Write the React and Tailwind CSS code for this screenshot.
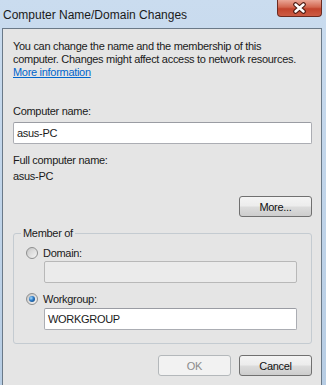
import React from 'react';

const font = { fontFamily: '"Liberation Sans", Arial, sans-serif' };

const Radio = ({ checked }) => (
  <span className="w-[12px] h-[12px] rounded-full border border-[#8e8f8f] bg-[linear-gradient(135deg,#c4c4c4,#f6f6f6)] flex items-center justify-center shrink-0">
    {checked ? (
      <span className="w-[6px] h-[6px] rounded-full bg-[radial-gradient(circle_at_35%_35%,#a6dcff_0%,#2a78c4_45%,#0d3a6e_100%)]" />
    ) : (
      <span className="w-[6px] h-[6px] rounded-full bg-[linear-gradient(135deg,#d2d2d2,#ececec)]" />
    )}
  </span>
);

const Button = ({ children, disabled, className = '' }) => (
  <button
    className={`w-[73px] h-[21px] rounded-[3px] border text-[11px] tracking-[-0.3px] flex items-center justify-center ${
      disabled
        ? 'border-[#b4b8bb] bg-[#f2f2f2] text-[#8b8b8b]'
        : 'border-[#707070] bg-[linear-gradient(to_bottom,#f4f4f4_0%,#ececec_48%,#dcdcdc_52%,#cdcdcd_100%)] text-[#111]'
    } ${className}`}
  >
    {children}
  </button>
);

const CloseIcon = () => (
  <svg width="15" height="12" viewBox="0 0 15 12">
    <path d="M3.5 2.5 L11.5 9.5 M11.5 2.5 L3.5 9.5" stroke="#4a1810" strokeWidth="4.6" strokeLinecap="round" />
    <path d="M3.5 2.5 L11.5 9.5 M11.5 2.5 L3.5 9.5" stroke="#ffffff" strokeWidth="2.5" strokeLinecap="round" />
  </svg>
);

export default function App() {
  return (
    <div
      className="w-[326px] h-[385px] flex flex-col overflow-hidden bg-[linear-gradient(to_bottom,#cadcef,#b7cde4)]"
      style={font}
    >
      {/* Title bar */}
      <div className="h-[28px] flex items-start justify-between shrink-0">
        <span className="mt-[8px] ml-[3px] text-[12px] leading-[14px] text-[#1a1a1a]">
          Computer Name/Domain Changes
        </span>
        <div className="mr-[4px] w-[45px] h-[17px] rounded-b-[4px] border border-t-0 border-[#6b2a20] bg-[linear-gradient(to_bottom,#eaa696_0%,#d2664f_45%,#c2442d_55%,#cc5c45_100%)] flex items-center justify-center">
          <CloseIcon />
        </div>
      </div>

      {/* Dialog body */}
      <div className="flex-1 ml-[2px] mr-[4px] border-l border-t border-r border-[#6a7988] bg-[#e5e5e5] pl-[10px] pr-[9px] pt-[11px] flex flex-col text-[11px] leading-[12px] tracking-[-0.3px] text-[#1a1a1a]">
        <p className="leading-[13px]">
          You can change the name and the membership of this
          <br />
          computer. Changes might affect access to network resources.
          <br />
          <span className="text-[#0066cc] underline">More information</span>
        </p>

        <label className="mt-[26px]">Computer name:</label>
        <div className="mt-[5px] h-[22px] rounded-[2px] border border-[#abadb3] border-t-[#9a9ca3] bg-white flex items-center pl-[3px]">
          asus-PC
        </div>

        <div className="mt-[10px]">Full computer name:</div>
        <div className="mt-[4px]">asus-PC</div>

        <div className="mt-[14px] flex justify-end">
          <Button className="h-[20px]">More...</Button>
        </div>

        <fieldset className="mt-[10px] rounded-[3px] border border-[#c4cbd1] pb-[13px]">
          <legend className="ml-[7px] px-[2px] leading-[12px]">Member of</legend>
          <div className="pt-[7px] flex flex-col">
            <div className="h-[14px] pl-[12px] flex items-center gap-[5px]">
              <Radio />
              <span>Domain:</span>
            </div>
            <div className="mt-[1px] ml-[30px] mr-[14px] h-[22px] rounded-[2px] border border-[#b8b8b8] bg-[#ebebeb]" />
            <div className="mt-[9px] h-[14px] pl-[12px] flex items-center gap-[5px]">
              <Radio checked />
              <span>Workgroup:</span>
            </div>
            <div className="mt-[2px] ml-[30px] mr-[14px] h-[22px] rounded-[2px] border border-[#abadb3] border-t-[#9a9ca3] bg-white flex items-center pl-[3px]">
              WORKGROUP
            </div>
          </div>
        </fieldset>

        <div className="mt-[11px] flex justify-end gap-[8px]">
          <Button disabled>OK</Button>
          <Button>Cancel</Button>
        </div>
      </div>
    </div>
  );
}
